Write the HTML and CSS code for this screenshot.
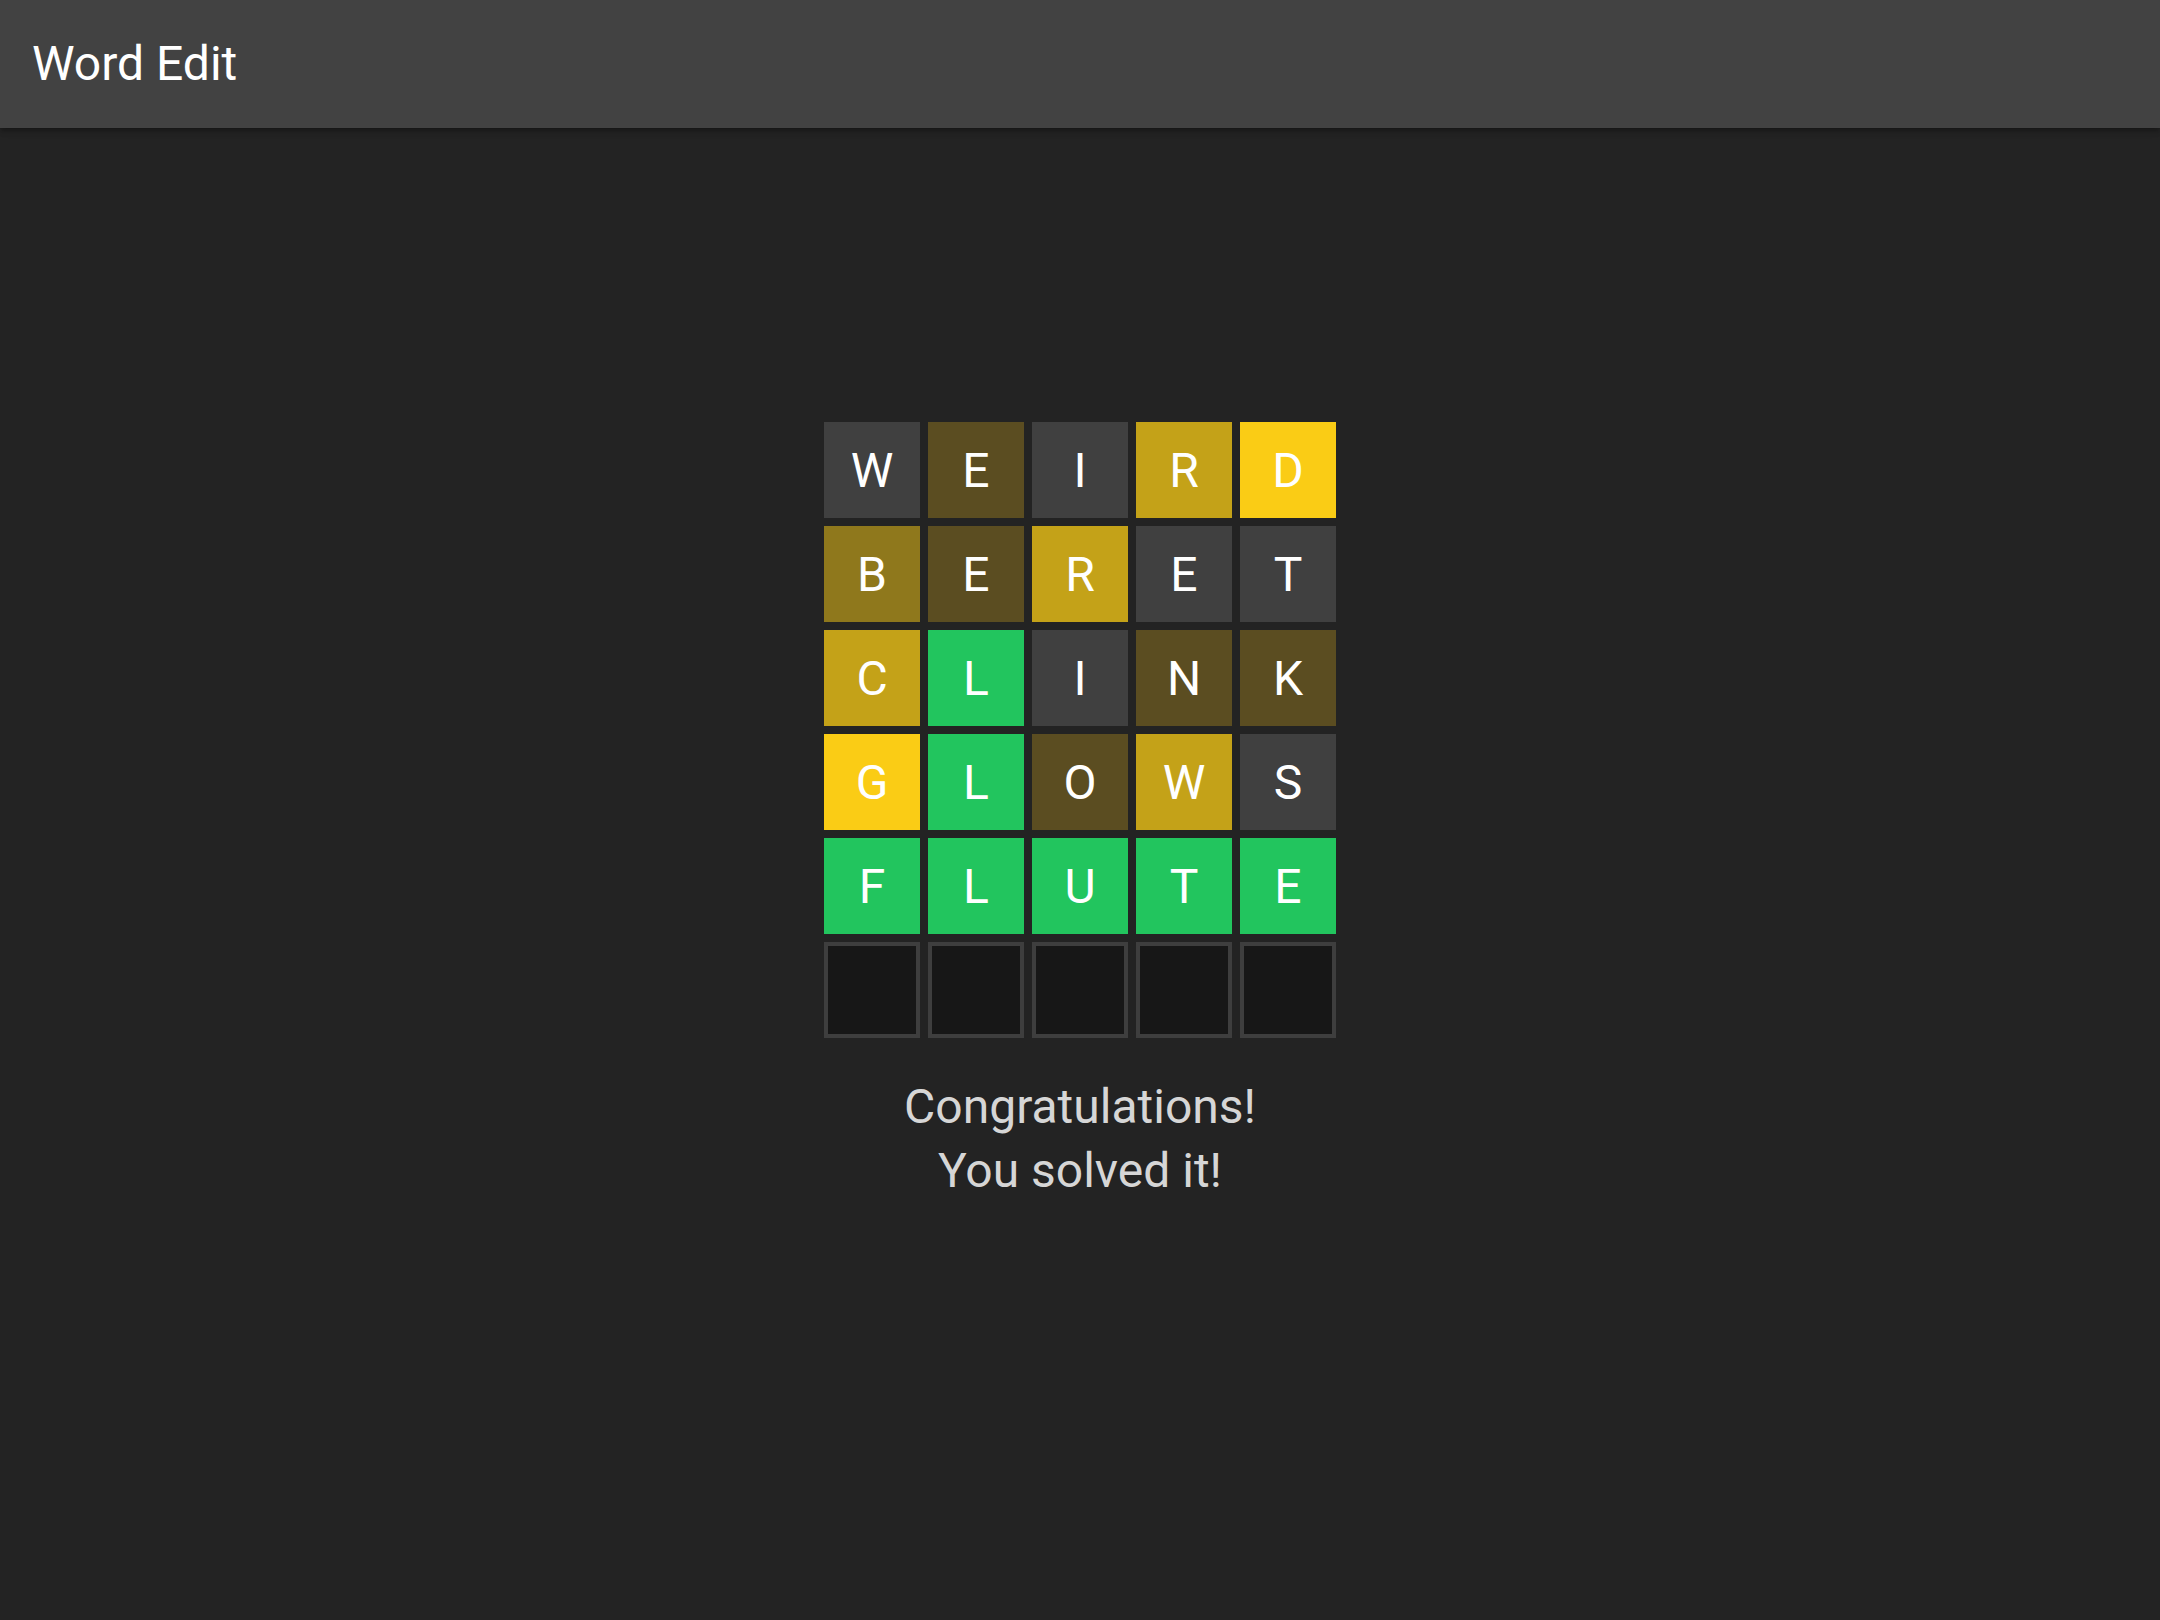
FILE: index.html
```html
<!DOCTYPE html>
<html lang="en">
<head>
<meta charset="utf-8">
<title>Word Edit</title>
<link rel="stylesheet" href="styles.css">
</head>
<body>
<header class="appbar">
  <h1 class="title">Word Edit</h1>
</header>
<main class="main">
  <div class="board">
    <div class="tile gray">W</div>
    <div class="tile y25">E</div>
    <div class="tile gray">I</div>
    <div class="tile y75">R</div>
    <div class="tile y100">D</div>

    <div class="tile y50">B</div>
    <div class="tile y25">E</div>
    <div class="tile y75">R</div>
    <div class="tile gray">E</div>
    <div class="tile gray">T</div>

    <div class="tile y75">C</div>
    <div class="tile green">L</div>
    <div class="tile gray">I</div>
    <div class="tile y25">N</div>
    <div class="tile y25">K</div>

    <div class="tile y100">G</div>
    <div class="tile green">L</div>
    <div class="tile y25">O</div>
    <div class="tile y75">W</div>
    <div class="tile gray">S</div>

    <div class="tile green">F</div>
    <div class="tile green">L</div>
    <div class="tile green">U</div>
    <div class="tile green">T</div>
    <div class="tile green">E</div>

    <div class="tile empty"></div>
    <div class="tile empty"></div>
    <div class="tile empty"></div>
    <div class="tile empty"></div>
    <div class="tile empty"></div>
  </div>
  <p class="message">Congratulations!<br>You solved it!</p>
</main>
</body>
</html>
```

FILE: styles.css
```css
* { box-sizing: border-box; }
html, body {
  margin: 0;
  padding: 0;
  background: #232323;
  font-family: Roboto, "Liberation Sans", sans-serif;
  color: #ffffff;
  min-height: 100%;
}
.appbar {
  height: 128px;
  background: #424242;
  display: flex;
  align-items: center;
  padding: 0 32px;
  box-shadow: 0 2px 4px -1px rgba(0,0,0,0.2), 0 4px 5px 0 rgba(0,0,0,0.14), 0 1px 10px 0 rgba(0,0,0,0.12);
  position: relative;
  z-index: 1;
}
.title {
  margin: 0;
  font-size: 48px;
  font-weight: 400;
  line-height: 1;
  color: #ffffff;
}
.main {
  display: flex;
  flex-direction: column;
  align-items: center;
  padding-top: 294px;
}
.board {
  display: grid;
  grid-template-columns: repeat(5, 96px);
  grid-auto-rows: 96px;
  gap: 8px;
}
.tile {
  display: flex;
  align-items: center;
  justify-content: center;
  font-size: 48px;
  color: #ffffff;
  line-height: 1;
  padding-top: 2px;
}
.gray { background: #404040; }
.y25 { background: #5b4d21; }
.y50 { background: #8f781c; }
.y75 { background: #c4a218; }
.y100 { background: #facc15; }
.green { background: #22c55e; }
.empty {
  background: #171717;
  border: 4px solid #3e3e3e;
  padding-top: 0;
}
.message {
  margin: 37px 0 0;
  font-size: 48px;
  line-height: 64px;
  text-align: center;
  color: #d6d6d6;
}
```
